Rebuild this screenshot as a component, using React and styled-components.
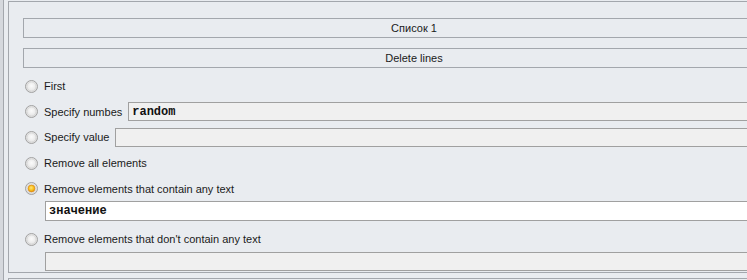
import React from "react";
import styled, { createGlobalStyle } from "styled-components";

const Global = createGlobalStyle`
  html, body { margin: 0; padding: 0; }
  body {
    background: #d5d8dd;
    overflow: hidden;
    font-family: "Liberation Sans", Arial, sans-serif;
    font-size: 11px;
    color: #1a1a1a;
  }
`;

const Window = styled.div`
  display: flex;
  flex-direction: column;
  height: 280px;
  margin-left: 3px;
  border-left: 1px solid #a3a7ad;
  padding-left: 4px;
  background: #e9ecf0;
  overflow: hidden;
`;

const Group = styled.div`
  margin-top: 1px;
  width: 821px;
  box-sizing: border-box;
  border-left: 1px solid #a3a7ad;
  border-top: 1px solid #a3a7ad;
  border-bottom: 1px solid #a3a7ad;
  padding: 16px 24px 1px 14px;
  display: flex;
  flex-direction: column;
`;

const NextGroup = styled.div`
  margin-top: 5px;
  width: 821px;
  height: 20px;
  border-left: 1px solid #a3a7ad;
  border-top: 1px solid #a3a7ad;
`;

const HeaderBar = styled.div`
  height: 20px;
  box-sizing: border-box;
  border: 1px solid #a3a7ad;
  display: flex;
  align-items: center;
  justify-content: center;
  margin-bottom: ${(p) => p.$mb || 0}px;
`;

const RadioRow = styled.label`
  display: flex;
  align-items: center;
  height: ${(p) => p.$h}px;
  padding-left: 2px;
  margin-top: ${(p) => p.$mt || 0}px;
  white-space: nowrap;
`;

const Label = styled.span`
  margin-left: 6px;
  margin-right: 6px;
`;

const Field = styled.div`
  flex: ${(p) => (p.$block ? "none" : 1)};
  height: ${(p) => p.$h || 19}px;
  box-sizing: border-box;
  border: 1px solid #a0a0a0;
  background: ${(p) => (p.$white ? "#ffffff" : "#f0f0f0")};
  display: flex;
  align-items: center;
  padding-left: 3px;
  margin-left: ${(p) => p.$ml || 0}px;
  font-family: "Liberation Mono", "Courier New", monospace;
  font-weight: bold;
  font-size: 12px;
  color: #111;
`;

const Radio = ({ checked }) => (
  <svg width="13" height="13" viewBox="0 0 13 13">
    <defs>
      <radialGradient id={checked ? "rgc" : "rgu"} cx="50%" cy="45%" r="60%">
        <stop offset="0%" stopColor="#fbfbfb" />
        <stop offset="70%" stopColor="#e6e6e6" />
        <stop offset="100%" stopColor="#cfcfcf" />
      </radialGradient>
      <radialGradient id="dot" cx="45%" cy="40%" r="60%">
        <stop offset="0%" stopColor="#ffe27a" />
        <stop offset="60%" stopColor="#f7c21c" />
        <stop offset="100%" stopColor="#e08a10" />
      </radialGradient>
    </defs>
    <circle cx="6.5" cy="6.5" r="6" fill={`url(#${checked ? "rgc" : "rgu"})`} stroke="#a2a2a2" strokeWidth="1" />
    <circle cx="6.5" cy="6.5" r="4.6" fill="none" stroke="#d2d2d2" strokeWidth="0.8" />
    {checked && <circle cx="6.5" cy="6.5" r="3.4" fill="url(#dot)" stroke="#e0901a" strokeWidth="0.8" />}
  </svg>
);

export default function App() {
  return (
    <>
      <Global />
      <Window>
        <Group>
          <HeaderBar $mb={10}>Список 1</HeaderBar>
          <HeaderBar $mb={5}>Delete lines</HeaderBar>
          <RadioRow $h={26}>
            <Radio />
            <Label>First</Label>
          </RadioRow>
          <RadioRow $h={25}>
            <Radio />
            <Label>Specify numbes</Label>
            <Field>random</Field>
          </RadioRow>
          <RadioRow $h={26}>
            <Radio />
            <Label>Specify value</Label>
            <Field />
          </RadioRow>
          <RadioRow $h={26}>
            <Radio />
            <Label>Remove all elements</Label>
          </RadioRow>
          <RadioRow $h={25}>
            <Radio checked />
            <Label>Remove elements that contain any text</Label>
          </RadioRow>
          <Field $white $block $h={20} $ml={22}>значение</Field>
          <RadioRow $h={26} $mt={5}>
            <Radio />
            <Label>Remove elements that don't contain any text</Label>
          </RadioRow>
          <Field $block $h={19} $ml={22} />
        </Group>
        <NextGroup />
      </Window>
    </>
  );
}
